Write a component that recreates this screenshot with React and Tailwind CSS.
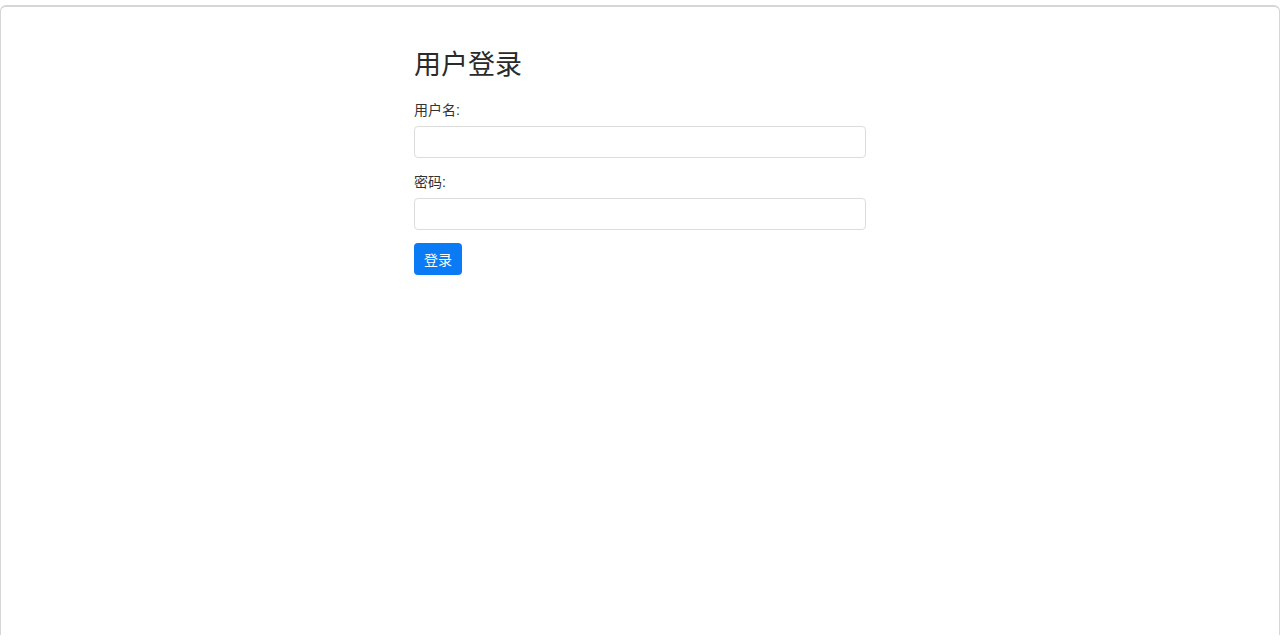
export default function App() {
  const font = { fontFamily: '"Liberation Sans", "Noto Sans CJK SC", sans-serif' };
  return (
    <div className="w-[1280px] h-[640px] bg-white overflow-hidden" style={font}>
      <div className="mt-[5px] h-[630px] border border-[#d6d6d6] border-t-2 border-b-0 rounded-t-[6px] bg-white">
        <div className="mx-auto w-[452px] pt-[41px]">
          <h1 className="text-[27px] leading-[34px] text-[#2a2a2a] font-normal mb-[18px]">用户登录</h1>
          <label className="block text-[14px] leading-[21px] text-[#333] mb-[5px]">用户名:</label>
          <input type="text" className="block w-full h-[32px] border border-[#dcdcdc] rounded-[4px] bg-white mb-[14px] outline-none" />
          <label className="block text-[14px] leading-[21px] text-[#333] mb-[5px]">密码:</label>
          <input type="password" className="block w-full h-[32px] border border-[#dcdcdc] rounded-[4px] bg-white mb-[13px] outline-none" />
          <button className="w-[48px] h-[32px] pt-[2px] bg-[#0a7bf5] text-white text-[14px] rounded-[4px]">登录</button>
        </div>
      </div>
    </div>
  );
}
